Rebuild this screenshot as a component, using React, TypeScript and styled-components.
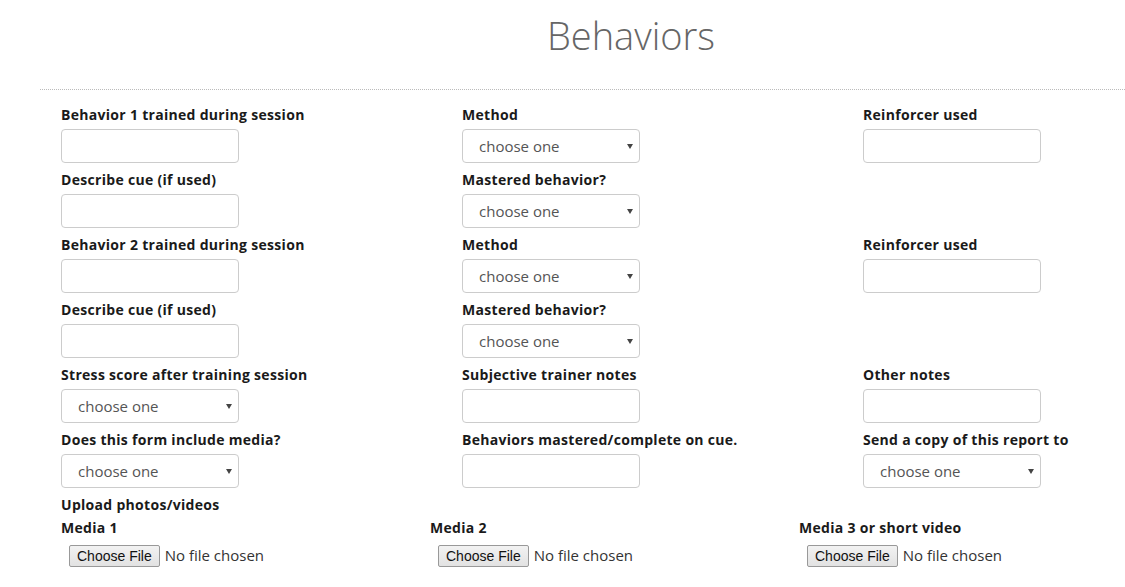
import React from 'react';
import styled, { createGlobalStyle } from 'styled-components';

const GlobalStyle = createGlobalStyle`
  html, body {
    margin: 0;
    padding: 0;
    background: #fff;
  }
  body {
    font-family: 'Open Sans', 'Liberation Sans', sans-serif;
    color: #222;
  }
`;

const Page = styled.div`
  width: 1125px;
  overflow: hidden;
`;

const Title = styled.h1`
  margin: 0;
  padding-top: 13px;
  height: 45px;
  text-align: center;
  font-weight: 300;
  font-size: 38px;
  line-height: 45px;
  color: #666;
  padding-left: 137px;
`;

const Divider = styled.hr`
  margin: 31px 0 0 40px;
  border: 0;
  border-top: 1px dotted #bbb;
`;

const FormGrid = styled.div`
  display: grid;
  grid-template-columns: 401px 401px 1fr;
  padding: 15px 0 0 61px;
`;

const Field = styled.div`
  display: flex;
  flex-direction: column;
  align-items: flex-start;
  padding-bottom: 7px;
`;

const Label = styled.label`
  display: block;
  font-weight: 700;
  font-size: 14px;
  line-height: 20px;
  letter-spacing: 0.3px;
  color: #1a1a1a;
  margin-bottom: 4px;
  white-space: nowrap;
`;

const TextInput = styled.input`
  box-sizing: border-box;
  width: 178px;
  height: 34px;
  border: 1px solid #ccc;
  border-radius: 4px;
  background: #fff;
  padding: 6px 12px;
  font: inherit;
  font-size: 15px;
`;

const SelectWrap = styled.span`
  position: relative;
  display: inline-block;
  width: 178px;
  height: 34px;
  &::after {
    content: '';
    position: absolute;
    right: 7px;
    top: 15px;
    border-left: 3px solid transparent;
    border-right: 3px solid transparent;
    border-top: 5px solid #444;
    pointer-events: none;
  }
`;

const Select = styled.select`
  box-sizing: border-box;
  appearance: none;
  width: 100%;
  height: 100%;
  border: 1px solid #ccc;
  border-radius: 4px;
  background: #fff;
  padding: 0 24px 0 16px;
  font-family: inherit;
  font-size: 15px;
  color: #555;
`;

const UploadHeading = styled(Label)`
  margin: 0 0 3px 61px;
  line-height: 20px;
`;

const MediaGrid = styled.div`
  display: grid;
  grid-template-columns: 369px 369px 1fr;
  padding-left: 61px;
`;

const MediaField = styled.div`
  display: flex;
  flex-direction: column;
  align-items: flex-start;
`;

const MediaLabel = styled(Label)`
  margin-bottom: 7px;
`;

const FileInput = styled.input`
  margin-left: 8px;
  font-family: inherit;
  font-size: 15px;
  color: #333;
  &::file-selector-button {
    font-family: 'Liberation Sans', Arial, sans-serif;
    font-size: 14px;
    color: #111;
    height: 22px;
    padding: 0 7px;
    margin-right: 5px;
    background: linear-gradient(#f2f2f2, #e2e2e2);
    border: 1px solid #999;
    border-radius: 2px;
  }
`;

type FieldDef = { label: string; kind: 'text' | 'select' } | null;

const rows: FieldDef[][] = [
  [
    { label: 'Behavior 1 trained during session', kind: 'text' },
    { label: 'Method', kind: 'select' },
    { label: 'Reinforcer used', kind: 'text' },
  ],
  [
    { label: 'Describe cue (if used)', kind: 'text' },
    { label: 'Mastered behavior?', kind: 'select' },
    null,
  ],
  [
    { label: 'Behavior 2 trained during session', kind: 'text' },
    { label: 'Method', kind: 'select' },
    { label: 'Reinforcer used', kind: 'text' },
  ],
  [
    { label: 'Describe cue (if used)', kind: 'text' },
    { label: 'Mastered behavior?', kind: 'select' },
    null,
  ],
  [
    { label: 'Stress score after training session', kind: 'select' },
    { label: 'Subjective trainer notes', kind: 'text' },
    { label: 'Other notes', kind: 'text' },
  ],
  [
    { label: 'Does this form include media?', kind: 'select' },
    { label: 'Behaviors mastered/complete on cue.', kind: 'text' },
    { label: 'Send a copy of this report to', kind: 'select' },
  ],
];

const media = ['Media 1', 'Media 2', 'Media 3 or short video'];

export default function App() {
  return (
    <Page>
      <GlobalStyle />
      <Title>Behaviors</Title>
      <Divider />
      <FormGrid>
        {rows.map((row, r) =>
          row.map((f, c) =>
            f ? (
              <Field key={`${r}-${c}`}>
                <Label>{f.label}</Label>
                {f.kind === 'text' ? (
                  <TextInput type="text" />
                ) : (
                  <SelectWrap>
                    <Select defaultValue="">
                      <option value="">choose one</option>
                    </Select>
                  </SelectWrap>
                )}
              </Field>
            ) : (
              <div key={`${r}-${c}`} />
            )
          )
        )}
      </FormGrid>
      <UploadHeading as="div">Upload photos/videos</UploadHeading>
      <MediaGrid>
        {media.map((m) => (
          <MediaField key={m}>
            <MediaLabel>{m}</MediaLabel>
            <FileInput type="file" />
          </MediaField>
        ))}
      </MediaGrid>
    </Page>
  );
}
